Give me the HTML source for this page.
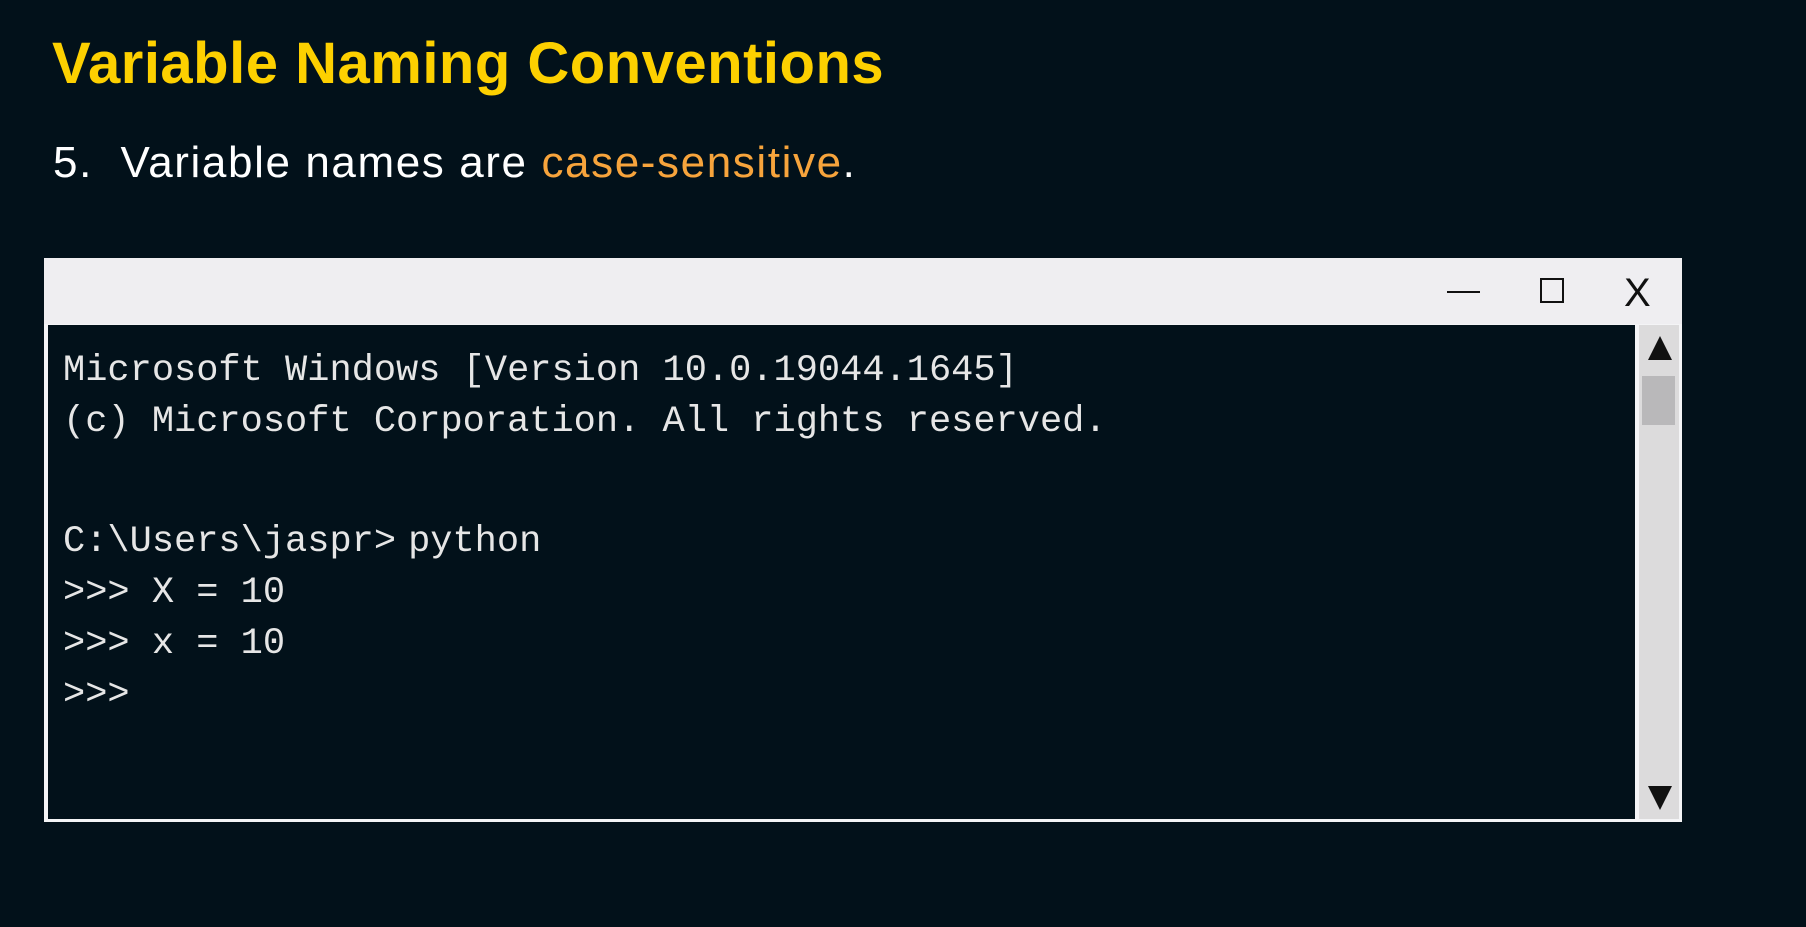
<!DOCTYPE html>
<html><head><meta charset="utf-8"><style>
*{margin:0;padding:0;box-sizing:border-box}
body{width:1806px;height:927px;background:#02111a;position:relative;overflow:hidden;font-family:"Liberation Sans",sans-serif}
.t{position:absolute;left:52px;top:30px;color:#fdd000;font-size:58px;font-weight:bold;letter-spacing:0.5px;white-space:nowrap}
.s{position:absolute;left:53px;top:138px;color:#fff;font-size:44px;letter-spacing:1.6px;white-space:nowrap}
.s span{color:#f7a43c}
.win{position:absolute;left:44px;top:258px;width:1638px;height:564px;background:#f4f4f6}
.tb{position:absolute;left:0;top:0;width:100%;height:66px;background:#efeef1}
.term{position:absolute;left:4px;top:67px;width:1587px;height:494px;background:#02111a}
.sb{position:absolute;left:1595px;top:67px;width:40px;height:494px;background:#dcdbdc}
.th{position:absolute;left:3px;top:51px;width:33px;height:49px;background:#b9b8ba}
.pre{position:absolute;left:63px;font-family:"Liberation Mono",monospace;font-size:37px;line-height:51px;color:#e6e6e6;white-space:pre}
</style></head><body>
<div class="t">Variable Naming Conventions</div>
<div class="s">5.&nbsp; Variable names are <span>case-sensitive</span>.</div>
<div class="win">
 <div class="tb"></div>
 <div style="position:absolute;left:1403px;top:33px;width:33px;height:2px;background:#111"></div>
 <div style="position:absolute;left:1496px;top:20px;width:24px;height:25px;border:2px solid #111"></div>
 <div style="position:absolute;left:1580px;top:12px;font-size:40px;color:#111;line-height:46px">X</div>
 <div class="term"></div>
 <div class="sb"><div class="th"></div>
  <svg style="position:absolute;left:8px;top:10px" width="26" height="26"><path d="M13 1L25 25H1Z" fill="#111"/></svg>
  <svg style="position:absolute;left:8px;top:460px" width="26" height="26"><path d="M1 1H25L13 25Z" fill="#111"/></svg>
 </div>
</div>
<div class="pre" style="top:346px">Microsoft Windows [Version 10.0.19044.1645]
(c) Microsoft Corporation. All rights reserved.</div>
<div class="pre" style="top:517px">C:\Users\jaspr&gt;<span style="margin-left:12px">python</span>
&gt;&gt;&gt; X = 10
&gt;&gt;&gt; x = 10
&gt;&gt;&gt;</div>
</body></html>
